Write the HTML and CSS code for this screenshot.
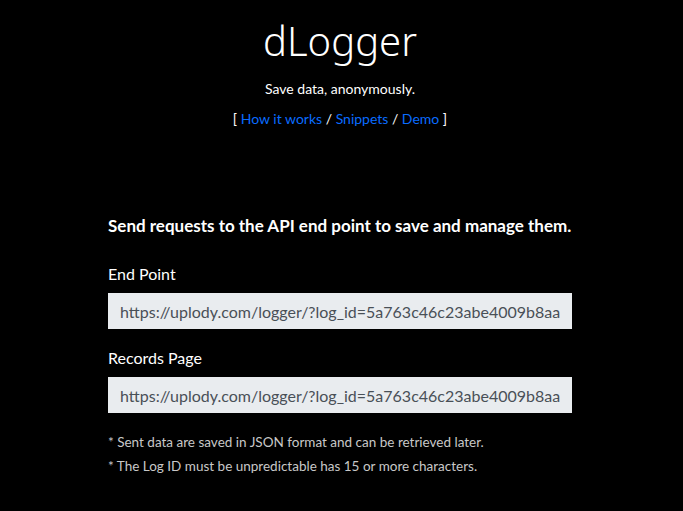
FILE: index.html
```html
<!DOCTYPE html>
<html lang="en">
<head>
    <meta charset="UTF-8">
    <meta name="viewport" content="width=device-width, initial-scale=1.0">
    <title>dLogger</title>
    <link rel="stylesheet" href="styles.css">
</head>
<body>
    <header class="hero">
        <h1 class="hero-title">dLogger</h1>
        <p class="hero-lead">Save data, anonymously.</p>
        <nav class="hero-nav">
            [ <a href="#how">How it works</a> / <a href="#snippets">Snippets</a> / <a href="#demo">Demo</a> ]
        </nav>
    </header>

    <main class="panel">
        <h2 class="panel-title">Send requests to the API end point to save and manage them.</h2>

        <div class="field">
            <label class="field-label" for="endPoint">End Point</label>
            <input class="field-input" id="endPoint" type="text" readonly
                   value="https://uplody.com/logger/?log_id=5a763c46c23abe4009b8aa">
        </div>

        <div class="field">
            <label class="field-label" for="recordsPage">Records Page</label>
            <input class="field-input" id="recordsPage" type="text" readonly
                   value="https://uplody.com/logger/?log_id=5a763c46c23abe4009b8aa&amp;view=1">
        </div>

        <ul class="notes">
            <li>* Sent data are saved in JSON format and can be retrieved later.</li>
            <li>* The Log ID must be unpredictable has 15 or more characters.</li>
        </ul>
    </main>
</body>
</html>
```

FILE: styles.css
```css
* {
    margin: 0;
    padding: 0;
    box-sizing: border-box;
}

body {
    background-color: #000;
    color: #fff;
    font-family: Lato, 'Noto Sans', sans-serif;
    font-size: 16px;
    line-height: 1.5;
    padding-right: 3px;
}

/* 头部 */
.hero {
    text-align: center;
    padding-top: 17px;
}

.hero-title {
    font-family: 'Noto Sans', Lato, sans-serif;
    font-size: 40px;
    font-weight: 300;
    line-height: 1.2;
}

.hero-lead {
    font-size: 14px;
    margin-top: 13px;
}

.hero-nav {
    font-size: 14px;
    margin-top: 9px;
}

.hero-nav a {
    color: #0a6cff;
    text-decoration: none;
}

/* 主体 */
.panel {
    width: 464px;
    margin: 85px auto 0;
}

.panel-title {
    font-size: 17px;
    font-weight: 700;
    line-height: 24px;
    margin-bottom: 24px;
}

.field {
    margin-bottom: 17px;
}

.field-label {
    display: block;
    line-height: 24px;
    margin-bottom: 7px;
}

.field-input {
    display: block;
    width: 100%;
    height: 36px;
    padding: 6px 12px;
    font: inherit;
    color: #495057;
    background: #e9ecef;
    border: 0;
    outline: none;
}

.notes {
    list-style: none;
    margin-top: 1px;
    font-size: 13.5px;
    color: #c8c8c8;
    line-height: 24px;
}
```
